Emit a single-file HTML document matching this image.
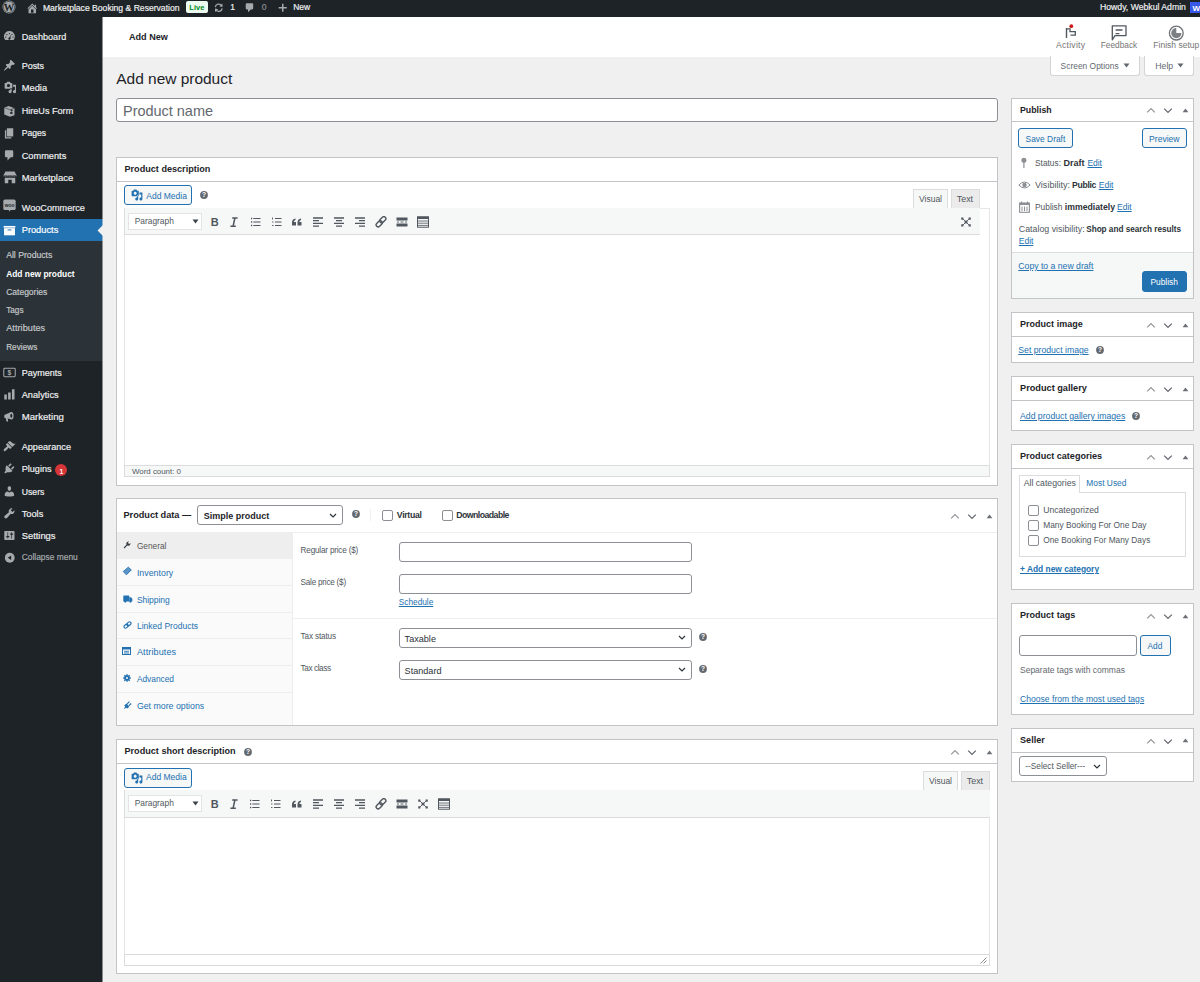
<!DOCTYPE html>
<html><head><meta charset="utf-8"><title>Add new product</title>
<style>
html,body{margin:0;padding:0;}
body{width:1200px;height:982px;overflow:hidden;position:relative;background:#f0f0f1;font-family:"Liberation Sans",sans-serif;}
.a{position:absolute;box-sizing:border-box;}
.t{position:absolute;line-height:0;white-space:pre;font-family:"Liberation Sans",sans-serif;}
.t.s{-webkit-text-stroke:0.18px currentColor;}
.t.b{-webkit-text-stroke:0;font-weight:700;}

</style></head><body>
<div class="a" style="left:0px;top:0px;width:1200px;height:17px;background:#1d2327;"></div>
<div class="a" style="left:0px;top:17px;width:102px;height:965px;background:#1d2327;"></div>
<div class="a" style="left:102px;top:17px;width:1098px;height:40px;background:#fff;"></div>
<div class="a" style="left:102px;top:17px;width:1px;height:40px;background:#8e9193;"></div>
<div class="a" style="left:102px;top:57px;width:1px;height:925px;background:#878b8c;"></div>
<div class="a" style="left:0px;top:219px;width:102px;height:22px;background:#2271b1;"></div>
<div class="a" style="left:0px;top:241px;width:102px;height:120px;background:#2c3338;"></div>
<div class="a" style="left:102px;top:219px;width:1px;height:22px;background:#89b1d1;"></div>
<div class="a" style="left:102px;top:241px;width:1px;height:120px;background:#8e9294;"></div>
<div class="t s" style="left:21.70px;top:37px;font-size:9.1px;color:#f0f0f1;letter-spacing:0.013px;">Dashboard</div>
<div class="t s" style="left:21.70px;top:66px;font-size:9.0px;color:#f0f0f1;letter-spacing:-0.025px;">Posts</div>
<div class="t s" style="left:21.70px;top:88px;font-size:9.3px;color:#f0f0f1;letter-spacing:0.028px;">Media</div>
<div class="t s" style="left:21.70px;top:111px;font-size:9.1px;color:#f0f0f1;">HireUs Form</div>
<div class="t s" style="left:21.70px;top:133px;font-size:8.6px;color:#f0f0f1;">Pages</div>
<div class="t s" style="left:21.70px;top:156px;font-size:9.2px;color:#f0f0f1;letter-spacing:0.017px;">Comments</div>
<div class="t s" style="left:21.70px;top:178px;font-size:9.5px;color:#f0f0f1;letter-spacing:-0.023px;">Marketplace</div>
<div class="t s" style="left:21.70px;top:208px;font-size:9.1px;color:#f0f0f1;letter-spacing:0.024px;">WooCommerce</div>
<div class="t s" style="left:21.70px;top:230px;font-size:9.3px;color:#fff;letter-spacing:-0.013px;">Products</div>
<div class="t s" style="left:21.70px;top:373px;font-size:9.0px;color:#f0f0f1;letter-spacing:0.014px;">Payments</div>
<div class="t s" style="left:21.70px;top:395px;font-size:9.2px;color:#f0f0f1;letter-spacing:0.025px;">Analytics</div>
<div class="t s" style="left:21.70px;top:417px;font-size:9.6px;color:#f0f0f1;">Marketing</div>
<div class="t s" style="left:21.70px;top:447px;font-size:9.1px;color:#f0f0f1;letter-spacing:0.023px;">Appearance</div>
<div class="t s" style="left:21.70px;top:469px;font-size:9.1px;color:#f0f0f1;">Plugins</div>
<div class="t s" style="left:21.70px;top:492px;font-size:8.7px;color:#f0f0f1;">Users</div>
<div class="t s" style="left:21.70px;top:514px;font-size:9.3px;color:#f0f0f1;letter-spacing:-0.029px;">Tools</div>
<div class="t s" style="left:21.70px;top:536px;font-size:9.4px;color:#f0f0f1;letter-spacing:-0.012px;">Settings</div>
<div class="t s" style="left:6.20px;top:255px;font-size:8.7px;color:#c5c8cb;letter-spacing:-0.019px;">All Products</div>
<div class="t b" style="left:6.20px;top:274px;font-size:8.4px;color:#fff;">Add new product</div>
<div class="t s" style="left:6.20px;top:292px;font-size:8.5px;color:#c5c8cb;">Categories</div>
<div class="t s" style="left:6.20px;top:311px;font-size:8.2px;color:#c5c8cb;">Tags</div>
<div class="t s" style="left:6.20px;top:328px;font-size:9.1px;color:#c5c8cb;letter-spacing:0.061px;">Attributes</div>
<div class="t s" style="left:6.20px;top:348px;font-size:8.2px;color:#c5c8cb;letter-spacing:0.017px;">Reviews</div>
<div class="t s" style="left:21.70px;top:557px;font-size:8.4px;color:#a7aaad;letter-spacing:0.014px;">Collapse menu</div>
<div class="a" style="left:55px;top:464px;width:12px;height:12px;border-radius:6px;background:#d63638;"></div>
<div class="t s" style="left:59.50px;top:472px;font-size:7px;color:#fff;">1</div>
<svg class="a" style="left:97px;top:225px;" width="6" height="11" viewBox="0 0 6 11"><path d="M6 0 L0.5 5.5 L6 11 Z" fill="#f0f0f1"/></svg>
<div class="t s" style="left:42.90px;top:8px;font-size:8.6px;color:#f0f0f1;">Marketplace Booking &amp; Reservation</div>
<div class="a" style="left:186px;top:1px;width:22px;height:12px;background:#edfaef;border-radius:2px;"></div>
<div class="t b" style="left:189.30px;top:8px;font-size:7.5px;color:#008a20;">Live</div>
<div class="t s" style="left:230.20px;top:7px;font-size:8.5px;color:#f0f0f1;">1</div>
<div class="t s" style="left:261.70px;top:7px;font-size:8.5px;color:#8c8f94;">0</div>
<div class="t s" style="left:293.20px;top:7px;font-size:8.5px;color:#f0f0f1;letter-spacing:-0.021px;">New</div>
<div class="t s" style="left:1100.00px;top:7px;font-size:8.7px;color:#f0f0f1;letter-spacing:-0.012px;">Howdy, Webkul Admin</div>
<div class="a" style="left:1190px;top:2px;width:10px;height:11px;background:#3858e9;"></div>
<div class="t b" style="left:129.00px;top:37px;font-size:9.1px;color:#1d2327;">Add New</div>
<div class="t" style="left:1056.00px;top:45px;font-size:8.6px;color:#757575;letter-spacing:0.254px;">Activity</div>
<div class="t" style="left:1100.70px;top:45px;font-size:8.3px;color:#757575;letter-spacing:0.017px;">Feedback</div>
<div class="t" style="left:1153.30px;top:45px;font-size:8.5px;color:#757575;letter-spacing:0.017px;">Finish setup</div>
<div class="a" style="left:1050px;top:56px;width:90px;height:20px;background:#fff;border:1px solid #d3d4d7;border-radius:0 0 3px 3px;border-top:none;"></div>
<div class="t" style="left:1060.60px;top:66px;font-size:8.4px;color:#646970;letter-spacing:0.022px;">Screen Options</div>
<div class="a" style="left:1144px;top:56px;width:50px;height:20px;background:#fff;border:1px solid #d3d4d7;border-radius:0 0 3px 3px;border-top:none;"></div>
<div class="t" style="left:1155.30px;top:66px;font-size:8.7px;color:#646970;">Help</div>
<svg class="a" style="left:1122.5px;top:63px;" width="7" height="5" viewBox="0 0 7 5"><path d="M0.5 0.5 L6.5 0.5 L3.5 4.5 Z" fill="#646970"/></svg>
<svg class="a" style="left:1176.7px;top:63px;" width="7" height="5" viewBox="0 0 7 5"><path d="M0.5 0.5 L6.5 0.5 L3.5 4.5 Z" fill="#646970"/></svg>
<div class="t" style="left:116.25px;top:79px;font-size:15.5px;color:#1d2327;letter-spacing:-0.023px;">Add new product</div>
<div class="a" style="left:116px;top:98px;width:882px;height:24px;background:#fff;border:1px solid #8c8f94;border-radius:3px;"></div>
<div class="t" style="left:123.00px;top:111px;font-size:14.5px;color:#646970;letter-spacing:-0.024px;">Product name</div>
<div class="a" style="left:116px;top:157px;width:882px;height:329px;background:#fff;border:1px solid #c3c4c7;"></div>
<div class="a" style="left:117px;top:181px;width:880px;height:1px;background:#c3c4c7;"></div>
<div class="t b" style="left:124.50px;top:169px;font-size:9.1px;color:#1d2327;">Product description</div>
<div class="a" style="left:124px;top:185px;width:68px;height:20px;background:#f6f7f7;border:1px solid #2271b1;border-radius:3px;"></div>
<div class="t" style="left:146.25px;top:196px;font-size:8.5px;color:#2271b1;">Add Media</div>
<svg class="a" style="left:130.5px;top:189.3px;" width="12" height="12" viewBox="0 0 20 20"><path d="M13 11V4c0-.55-.45-1-1-1h-1.67L9 1H5L3.67 3H2c-.55 0-1 .45-1 1v7c0 .55.45 1 1 1h10c.55 0 1-.45 1-1zM7 4.5c1.38 0 2.5 1.12 2.5 2.5S8.38 9.5 7 9.5 4.5 8.380 4.5 7 5.62 4.5 7 4.5zM14 6h5v10.5c0 1.38-1.12 2.5-2.5 2.5S14 17.88 14 16.5s1.12-2.5 2.5-2.5c.17 0 .34.02.5.05V9h-3V6zm-4 8.05V11h2v5.5c0 1.38-1.12 2.5-2.5 2.5S7 17.88 7 16.5 8.12 14 9.5 14c.17 0 .34.02.5.05z" fill="#2271b1" fill-rule="evenodd"/></svg>
<svg class="a" style="left:198.75px;top:190px;" width="10" height="10" viewBox="0 0 10 10"><circle cx="5" cy="5" r="3.9" fill="#646970"/><text x="5.1" y="7.4" font-size="6.6" font-weight="700" fill="#fff" text-anchor="middle" font-family="Liberation Sans">?</text></svg>
<div class="a" style="left:124px;top:208px;width:866px;height:269px;background:#fff;border:1px solid #e6e6e8;"></div>
<div class="a" style="left:913px;top:189px;width:35px;height:20px;background:#f6f7f7;border:1px solid #dcdcde;border-bottom:none;"></div>
<div class="a" style="left:951px;top:189px;width:29px;height:20px;background:#ebebeb;border:1px solid #dcdcde;border-bottom:none;"></div>
<div class="t" style="left:919.00px;top:199px;font-size:8.5px;color:#50575e;">Visual</div>
<div class="t" style="left:956.80px;top:199px;font-size:8.9px;color:#50575e;letter-spacing:-0.011px;">Text</div>
<div class="a" style="left:124px;top:208px;width:827px;height:1px;background:#dcdcde;"></div>
<div class="a" style="left:914px;top:208px;width:33px;height:1px;background:#f6f7f7;"></div>
<div class="a" style="left:124px;top:208px;width:856px;height:26px;background:#f6f7f7;border:1px solid #dcdcde;border-top:none;border-right:none;border-bottom:none;"></div>
<div class="a" style="left:124px;top:234px;width:856px;height:1px;background:#dcdcde;"></div>
<div class="a" style="left:124px;top:465px;width:866px;height:12px;background:#f6f7f7;border:1px solid #dcdcde;"></div>
<div class="a" style="left:128px;top:213px;width:74px;height:17px;background:#fff;border:1px solid #e4e4e4;"></div>
<div class="t" style="left:134.70px;top:221px;font-size:8.4px;color:#50575e;">Paragraph</div>
<svg class="a" style="left:191.5px;top:219.0px;" width="7" height="5" viewBox="0 0 7 5"><path d="M0.5 0.5 L6.5 0.5 L3.5 4.5 Z" fill="#3c434a"/></svg>
<div class="t" style="left:132.00px;top:472px;font-size:7.9px;color:#50575e;">Word count: 0</div>
<div class="a" style="left:116px;top:498px;width:882px;height:228px;background:#fff;border:1px solid #c3c4c7;"></div>
<div class="a" style="left:117px;top:532px;width:880px;height:1px;background:#eee;"></div>
<div class="t b" style="left:123.50px;top:515px;font-size:9.2px;color:#1d2327;letter-spacing:-0.018px;">Product data —</div>
<div class="a" style="left:197px;top:505px;width:146px;height:20px;background:#fff;border:1px solid #8c8f94;border-radius:3px;"></div>
<div class="t b" style="left:203.75px;top:516px;font-size:9.0px;color:#1d2327;">Simple product</div>
<svg class="a" style="left:350.7px;top:509px;" width="10" height="10" viewBox="0 0 10 10"><circle cx="5" cy="5" r="3.9" fill="#646970"/><text x="5.1" y="7.4" font-size="6.6" font-weight="700" fill="#fff" text-anchor="middle" font-family="Liberation Sans">?</text></svg>
<div class="a" style="left:370px;top:509px;width:1px;height:12px;background:#f0f0f1;"></div>
<div class="a" style="left:382px;top:510px;width:11px;height:11px;background:#fff;border:1px solid #8c8f94;border-radius:2px;"></div>
<div class="t b" style="left:396.80px;top:515px;font-size:8.7px;color:#2c3338;letter-spacing:-0.304px;">Virtual</div>
<div class="a" style="left:442px;top:510px;width:11px;height:11px;background:#fff;border:1px solid #8c8f94;border-radius:2px;"></div>
<div class="t b" style="left:456.30px;top:515px;font-size:8.7px;color:#2c3338;letter-spacing:-0.526px;">Downloadable</div>
<svg class="a" style="left:949.8px;top:513px;" width="10" height="7" viewBox="0 0 10 7"><path d="M1.2 5.4 L5 1.6 L8.8 5.4" stroke="#94979b" stroke-width="1.3" fill="none"/></svg>
<svg class="a" style="left:966.7px;top:513px;" width="10" height="7" viewBox="0 0 10 7"><path d="M1.2 1.6 L5 5.4 L8.8 1.6" stroke="#646970" stroke-width="1.3" fill="none"/></svg>
<svg class="a" style="left:985.8px;top:513.7px;" width="7" height="5" viewBox="0 0 7 5"><path d="M0.6 4.3 L6.4 4.3 L3.5 0.6 Z" fill="#6c7075"/></svg>
<div class="a" style="left:117px;top:533px;width:175px;height:192px;background:#fafafa;"></div>
<div class="a" style="left:292px;top:533px;width:1px;height:192px;background:#eee;"></div>
<div class="a" style="left:117px;top:533px;width:175px;height:26px;background:#eee;"></div>
<div class="a" style="left:117px;top:585px;width:175px;height:1px;background:#eee;"></div>
<div class="a" style="left:117px;top:612px;width:175px;height:1px;background:#eee;"></div>
<div class="a" style="left:117px;top:638px;width:175px;height:1px;background:#eee;"></div>
<div class="a" style="left:117px;top:665px;width:175px;height:1px;background:#eee;"></div>
<div class="a" style="left:117px;top:692px;width:175px;height:1px;background:#eee;"></div>
<div class="t" style="left:136.90px;top:546px;font-size:8.3px;color:#555;">General</div>
<div class="t" style="left:136.90px;top:573px;font-size:8.8px;color:#2271b1;letter-spacing:0.023px;">Inventory</div>
<div class="t" style="left:136.90px;top:600px;font-size:8.5px;color:#2271b1;letter-spacing:-0.024px;">Shipping</div>
<div class="t" style="left:136.90px;top:626px;font-size:8.5px;color:#2271b1;letter-spacing:0.018px;">Linked Products</div>
<div class="t" style="left:136.90px;top:652px;font-size:9.1px;color:#2271b1;letter-spacing:0.095px;">Attributes</div>
<div class="t" style="left:136.90px;top:679px;font-size:8.4px;color:#2271b1;letter-spacing:-0.026px;">Advanced</div>
<div class="t" style="left:136.90px;top:706px;font-size:8.8px;color:#2271b1;letter-spacing:-0.013px;">Get more options</div>
<div class="t" style="left:300.60px;top:551px;font-size:8.2px;color:#50575e;letter-spacing:-0.206px;">Regular price ($)</div>
<div class="a" style="left:399px;top:542px;width:293px;height:20px;background:#fff;border:1px solid #8c8f94;border-radius:3px;"></div>
<div class="t" style="left:300.60px;top:583px;font-size:8.2px;color:#50575e;letter-spacing:-0.242px;">Sale price ($)</div>
<div class="a" style="left:399px;top:574px;width:293px;height:20px;background:#fff;border:1px solid #8c8f94;border-radius:3px;"></div>
<div class="t" style="left:398.80px;top:602px;font-size:8.3px;color:#2271b1;letter-spacing:-0.016px;text-decoration:underline;text-underline-offset:1px;">Schedule</div>
<div class="a" style="left:293px;top:618px;width:704px;height:1px;background:#eee;"></div>
<div class="t" style="left:300.60px;top:637px;font-size:8.2px;color:#50575e;letter-spacing:-0.156px;">Tax status</div>
<div class="a" style="left:399px;top:628px;width:293px;height:20px;background:#fff;border:1px solid #8c8f94;border-radius:3px;"></div>
<div class="t" style="left:404.60px;top:639px;font-size:9.1px;color:#2c3338;">Taxable</div>
<div class="t" style="left:300.60px;top:669px;font-size:8.2px;color:#50575e;letter-spacing:-0.400px;">Tax class</div>
<div class="a" style="left:399px;top:660px;width:293px;height:20px;background:#fff;border:1px solid #8c8f94;border-radius:3px;"></div>
<div class="t" style="left:404.60px;top:671px;font-size:9.1px;color:#2c3338;">Standard</div>
<svg class="a" style="left:697.5px;top:632px;" width="10" height="10" viewBox="0 0 10 10"><circle cx="5" cy="5" r="3.9" fill="#646970"/><text x="5.1" y="7.4" font-size="6.6" font-weight="700" fill="#fff" text-anchor="middle" font-family="Liberation Sans">?</text></svg>
<svg class="a" style="left:697.5px;top:663.9px;" width="10" height="10" viewBox="0 0 10 10"><circle cx="5" cy="5" r="3.9" fill="#646970"/><text x="5.1" y="7.4" font-size="6.6" font-weight="700" fill="#fff" text-anchor="middle" font-family="Liberation Sans">?</text></svg>
<svg class="a" style="left:329px;top:512.9px;" width="8" height="5" viewBox="0 0 8 5"><path d="M1 1 L4 4 L7 1" stroke="#2c3338" stroke-width="1.2" fill="none"/></svg>
<svg class="a" style="left:677.9px;top:635.3px;" width="8" height="5" viewBox="0 0 8 5"><path d="M1 1 L4 4 L7 1" stroke="#2c3338" stroke-width="1.2" fill="none"/></svg>
<svg class="a" style="left:677.9px;top:667.3px;" width="8" height="5" viewBox="0 0 8 5"><path d="M1 1 L4 4 L7 1" stroke="#2c3338" stroke-width="1.2" fill="none"/></svg>
<div class="a" style="left:116px;top:739px;width:882px;height:235px;background:#fff;border:1px solid #c3c4c7;"></div>
<div class="a" style="left:117px;top:763px;width:880px;height:1px;background:#c3c4c7;"></div>
<div class="t b" style="left:124.50px;top:751px;font-size:9.1px;color:#1d2327;">Product short description</div>
<svg class="a" style="left:243.3px;top:746.5px;" width="10" height="10" viewBox="0 0 10 10"><circle cx="5" cy="5" r="3.9" fill="#646970"/><text x="5.1" y="7.4" font-size="6.6" font-weight="700" fill="#fff" text-anchor="middle" font-family="Liberation Sans">?</text></svg>
<svg class="a" style="left:950px;top:748.8px;" width="10" height="7" viewBox="0 0 10 7"><path d="M1.2 5.4 L5 1.6 L8.8 5.4" stroke="#94979b" stroke-width="1.3" fill="none"/></svg>
<svg class="a" style="left:966.8px;top:748.8px;" width="10" height="7" viewBox="0 0 10 7"><path d="M1.2 1.6 L5 5.4 L8.8 1.6" stroke="#646970" stroke-width="1.3" fill="none"/></svg>
<svg class="a" style="left:985.5px;top:749.5px;" width="7" height="5" viewBox="0 0 7 5"><path d="M0.6 4.3 L6.4 4.3 L3.5 0.6 Z" fill="#6c7075"/></svg>
<div class="a" style="left:124px;top:768px;width:68px;height:20px;background:#f6f7f7;border:1px solid #2271b1;border-radius:3px;"></div>
<div class="t" style="left:146.00px;top:777px;font-size:8.5px;color:#2271b1;">Add Media</div>
<svg class="a" style="left:130.5px;top:772.3px;" width="12" height="12" viewBox="0 0 20 20"><path d="M13 11V4c0-.55-.45-1-1-1h-1.67L9 1H5L3.67 3H2c-.55 0-1 .45-1 1v7c0 .55.45 1 1 1h10c.55 0 1-.45 1-1zM7 4.5c1.38 0 2.5 1.12 2.5 2.5S8.38 9.5 7 9.5 4.5 8.380 4.5 7 5.62 4.5 7 4.5zM14 6h5v10.5c0 1.38-1.12 2.5-2.5 2.5S14 17.88 14 16.5s1.12-2.5 2.5-2.5c.17 0 .34.02.5.05V9h-3V6zm-4 8.05V11h2v5.5c0 1.38-1.12 2.5-2.5 2.5S7 17.88 7 16.5 8.12 14 9.5 14c.17 0 .34.02.5.05z" fill="#2271b1" fill-rule="evenodd"/></svg>
<div class="a" style="left:124px;top:790px;width:866px;height:176px;background:#fff;border:1px solid #e6e6e8;"></div>
<div class="a" style="left:923px;top:771px;width:35px;height:20px;background:#f6f7f7;border:1px solid #dcdcde;border-bottom:none;"></div>
<div class="a" style="left:961px;top:771px;width:29px;height:20px;background:#ebebeb;border:1px solid #dcdcde;border-bottom:none;"></div>
<div class="t" style="left:929.00px;top:781px;font-size:8.5px;color:#50575e;">Visual</div>
<div class="t" style="left:966.80px;top:781px;font-size:8.9px;color:#50575e;letter-spacing:-0.011px;">Text</div>
<div class="a" style="left:124px;top:790px;width:837px;height:1px;background:#dcdcde;"></div>
<div class="a" style="left:924px;top:790px;width:33px;height:1px;background:#f6f7f7;"></div>
<div class="a" style="left:124px;top:790px;width:866px;height:27px;background:#f6f7f7;border:1px solid #dcdcde;border-top:none;border-right:none;border-bottom:none;"></div>
<div class="a" style="left:124px;top:817px;width:866px;height:1px;background:#dcdcde;"></div>
<div class="a" style="left:124px;top:954px;width:866px;height:12px;background:#fff;border:1px solid #dcdcde;"></div>
<div class="a" style="left:128px;top:795px;width:74px;height:17px;background:#fff;border:1px solid #e4e4e4;"></div>
<div class="t" style="left:134.70px;top:803px;font-size:8.4px;color:#50575e;">Paragraph</div>
<svg class="a" style="left:191.5px;top:801.0px;" width="7" height="5" viewBox="0 0 7 5"><path d="M0.5 0.5 L6.5 0.5 L3.5 4.5 Z" fill="#3c434a"/></svg>
<svg class="a" style="left:980px;top:957px;" width="7" height="7" viewBox="0 0 7 7"><path d="M6.5 0.5 L0.5 6.5 M6.5 3.5 L3.5 6.5" stroke="#8c8f94" stroke-width="1"/></svg>
<div class="a" style="left:1011px;top:98px;width:183px;height:201px;background:#fff;border:1px solid #c3c4c7;"></div>
<div class="a" style="left:1012px;top:121px;width:181px;height:1px;background:#c3c4c7;"></div>
<div class="t b" style="left:1020.00px;top:110px;font-size:8.8px;color:#1d2327;letter-spacing:-0.011px;">Publish</div>
<svg class="a" style="left:1146.2px;top:107.4px;" width="10" height="7" viewBox="0 0 10 7"><path d="M1.2 5.4 L5 1.6 L8.8 5.4" stroke="#94979b" stroke-width="1.3" fill="none"/></svg>
<svg class="a" style="left:1163px;top:107.4px;" width="10" height="7" viewBox="0 0 10 7"><path d="M1.2 1.6 L5 5.4 L8.8 1.6" stroke="#646970" stroke-width="1.3" fill="none"/></svg>
<svg class="a" style="left:1181.5px;top:108.1px;" width="7" height="5" viewBox="0 0 7 5"><path d="M0.6 4.3 L6.4 4.3 L3.5 0.6 Z" fill="#6c7075"/></svg>
<div class="a" style="left:1018px;top:128px;width:55px;height:20px;background:#f6f7f7;border:1px solid #2271b1;border-radius:3px;"></div>
<div class="t" style="left:1025.60px;top:139px;font-size:8.4px;color:#2271b1;letter-spacing:0.012px;">Save Draft</div>
<div class="a" style="left:1142px;top:128px;width:45px;height:20px;background:#f6f7f7;border:1px solid #2271b1;border-radius:3px;"></div>
<div class="t" style="left:1149.10px;top:139px;font-size:8.6px;color:#2271b1;letter-spacing:-0.019px;">Preview</div>
<div class="t" style="left:1035.00px;top:163px;font-size:8.3px;color:#50575e;letter-spacing:0.024px;">Status:</div>
<div class="t b" style="left:1063.50px;top:163px;font-size:9.0px;color:#2c3338;letter-spacing:0.021px;">Draft</div>
<div class="t" style="left:1087.40px;top:163px;font-size:8.5px;color:#2271b1;letter-spacing:-0.021px;text-decoration:underline;text-underline-offset:1px;">Edit</div>
<div class="t" style="left:1035.00px;top:185px;font-size:9.0px;color:#50575e;letter-spacing:0.017px;">Visibility:</div>
<div class="t b" style="left:1072.00px;top:185px;font-size:8.6px;color:#2c3338;letter-spacing:-0.280px;">Public</div>
<div class="t" style="left:1098.80px;top:185px;font-size:8.5px;color:#2271b1;letter-spacing:-0.021px;text-decoration:underline;text-underline-offset:1px;">Edit</div>
<div class="t" style="left:1035.00px;top:207px;font-size:8.4px;color:#50575e;">Publish</div>
<div class="t b" style="left:1064.80px;top:207px;font-size:8.7px;color:#2c3338;">immediately</div>
<div class="t" style="left:1117.10px;top:207px;font-size:8.5px;color:#2271b1;letter-spacing:-0.021px;text-decoration:underline;text-underline-offset:1px;">Edit</div>
<div class="t" style="left:1018.80px;top:229px;font-size:8.8px;color:#50575e;letter-spacing:0.016px;">Catalog visibility:</div>
<div class="t b" style="left:1086.20px;top:230px;font-size:8.2px;color:#2c3338;letter-spacing:-0.011px;">Shop and search results</div>
<div class="t" style="left:1018.80px;top:241px;font-size:8.5px;color:#2271b1;letter-spacing:-0.021px;text-decoration:underline;text-underline-offset:1px;">Edit</div>
<div class="a" style="left:1012px;top:252px;width:181px;height:1px;background:#dcdcde;"></div>
<div class="a" style="left:1012px;top:253px;width:181px;height:45px;background:#f6f7f7;"></div>
<div class="t" style="left:1018.30px;top:266px;font-size:8.7px;color:#2271b1;letter-spacing:-0.013px;text-decoration:underline;text-underline-offset:1px;">Copy to a new draft</div>
<div class="a" style="left:1142px;top:271px;width:45px;height:21px;background:#2271b1;border:1px solid #2271b1;border-radius:3px;"></div>
<div class="t" style="left:1150.40px;top:282px;font-size:8.4px;color:#fff;">Publish</div>
<div class="a" style="left:1011px;top:312px;width:183px;height:51px;background:#fff;border:1px solid #c3c4c7;"></div>
<div class="a" style="left:1012px;top:336px;width:181px;height:1px;background:#c3c4c7;"></div>
<div class="t b" style="left:1020.00px;top:324px;font-size:9.0px;color:#1d2327;letter-spacing:0.016px;">Product image</div>
<svg class="a" style="left:1146.2px;top:322px;" width="10" height="7" viewBox="0 0 10 7"><path d="M1.2 5.4 L5 1.6 L8.8 5.4" stroke="#94979b" stroke-width="1.3" fill="none"/></svg>
<svg class="a" style="left:1163px;top:322px;" width="10" height="7" viewBox="0 0 10 7"><path d="M1.2 1.6 L5 5.4 L8.8 1.6" stroke="#646970" stroke-width="1.3" fill="none"/></svg>
<svg class="a" style="left:1181.5px;top:322.7px;" width="7" height="5" viewBox="0 0 7 5"><path d="M0.6 4.3 L6.4 4.3 L3.5 0.6 Z" fill="#6c7075"/></svg>
<div class="t" style="left:1018.30px;top:350px;font-size:8.7px;color:#2271b1;letter-spacing:-0.013px;text-decoration:underline;text-underline-offset:1px;">Set product image</div>
<svg class="a" style="left:1095.4px;top:344.8px;" width="10" height="10" viewBox="0 0 10 10"><circle cx="5" cy="5" r="3.9" fill="#646970"/><text x="5.1" y="7.4" font-size="6.6" font-weight="700" fill="#fff" text-anchor="middle" font-family="Liberation Sans">?</text></svg>
<div class="a" style="left:1011px;top:376px;width:183px;height:55px;background:#fff;border:1px solid #c3c4c7;"></div>
<div class="a" style="left:1012px;top:400px;width:181px;height:1px;background:#c3c4c7;"></div>
<div class="t b" style="left:1020.00px;top:388px;font-size:9.2px;color:#1d2327;">Product gallery</div>
<svg class="a" style="left:1146.2px;top:386.2px;" width="10" height="7" viewBox="0 0 10 7"><path d="M1.2 5.4 L5 1.6 L8.8 5.4" stroke="#94979b" stroke-width="1.3" fill="none"/></svg>
<svg class="a" style="left:1163px;top:386.2px;" width="10" height="7" viewBox="0 0 10 7"><path d="M1.2 1.6 L5 5.4 L8.8 1.6" stroke="#646970" stroke-width="1.3" fill="none"/></svg>
<svg class="a" style="left:1181.5px;top:386.9px;" width="7" height="5" viewBox="0 0 7 5"><path d="M0.6 4.3 L6.4 4.3 L3.5 0.6 Z" fill="#6c7075"/></svg>
<div class="t" style="left:1020.00px;top:416px;font-size:8.7px;color:#2271b1;text-decoration:underline;text-underline-offset:1px;">Add product gallery images</div>
<svg class="a" style="left:1131.3px;top:411px;" width="10" height="10" viewBox="0 0 10 10"><circle cx="5" cy="5" r="3.9" fill="#646970"/><text x="5.1" y="7.4" font-size="6.6" font-weight="700" fill="#fff" text-anchor="middle" font-family="Liberation Sans">?</text></svg>
<div class="a" style="left:1011px;top:444px;width:183px;height:146px;background:#fff;border:1px solid #c3c4c7;"></div>
<div class="a" style="left:1012px;top:468px;width:181px;height:1px;background:#c3c4c7;"></div>
<div class="t b" style="left:1020.00px;top:456px;font-size:9.1px;color:#1d2327;letter-spacing:-0.014px;">Product categories</div>
<svg class="a" style="left:1146.2px;top:454.2px;" width="10" height="7" viewBox="0 0 10 7"><path d="M1.2 5.4 L5 1.6 L8.8 5.4" stroke="#94979b" stroke-width="1.3" fill="none"/></svg>
<svg class="a" style="left:1163px;top:454.2px;" width="10" height="7" viewBox="0 0 10 7"><path d="M1.2 1.6 L5 5.4 L8.8 1.6" stroke="#646970" stroke-width="1.3" fill="none"/></svg>
<svg class="a" style="left:1181.5px;top:454.9px;" width="7" height="5" viewBox="0 0 7 5"><path d="M0.6 4.3 L6.4 4.3 L3.5 0.6 Z" fill="#6c7075"/></svg>
<div class="a" style="left:1019px;top:492px;width:167px;height:65px;background:#fff;border:1px solid #dcdcde;"></div>
<div class="a" style="left:1019px;top:475px;width:61px;height:18px;background:#fff;border:1px solid #dcdcde;border-bottom:none;"></div>
<div class="t" style="left:1023.70px;top:483px;font-size:8.7px;color:#50575e;">All categories</div>
<div class="t" style="left:1086.25px;top:483px;font-size:8.4px;color:#2271b1;letter-spacing:0.018px;">Most Used</div>
<div class="a" style="left:1028px;top:505px;width:11px;height:11px;background:#fff;border:1px solid #8c8f94;border-radius:2px;"></div>
<div class="t" style="left:1043.20px;top:510px;font-size:8.6px;color:#50575e;letter-spacing:0.019px;">Uncategorized</div>
<div class="a" style="left:1028px;top:520px;width:11px;height:11px;background:#fff;border:1px solid #8c8f94;border-radius:2px;"></div>
<div class="t" style="left:1043.20px;top:525px;font-size:8.4px;color:#50575e;">Many Booking For One Day</div>
<div class="a" style="left:1028px;top:535px;width:11px;height:11px;background:#fff;border:1px solid #8c8f94;border-radius:2px;"></div>
<div class="t" style="left:1043.20px;top:540px;font-size:8.3px;color:#50575e;letter-spacing:0.026px;">One Booking For Many Days</div>
<div class="t b" style="left:1020.00px;top:569px;font-size:8.4px;color:#2271b1;text-decoration:underline;text-underline-offset:1px;">+ Add new category</div>
<div class="a" style="left:1011px;top:603px;width:183px;height:112px;background:#fff;border:1px solid #c3c4c7;"></div>
<div class="t b" style="left:1020.00px;top:615px;font-size:9.0px;color:#1d2327;letter-spacing:0.019px;">Product tags</div>
<svg class="a" style="left:1146.2px;top:612.8px;" width="10" height="7" viewBox="0 0 10 7"><path d="M1.2 5.4 L5 1.6 L8.8 5.4" stroke="#94979b" stroke-width="1.3" fill="none"/></svg>
<svg class="a" style="left:1163px;top:612.8px;" width="10" height="7" viewBox="0 0 10 7"><path d="M1.2 1.6 L5 5.4 L8.8 1.6" stroke="#646970" stroke-width="1.3" fill="none"/></svg>
<svg class="a" style="left:1181.5px;top:613.5px;" width="7" height="5" viewBox="0 0 7 5"><path d="M0.6 4.3 L6.4 4.3 L3.5 0.6 Z" fill="#6c7075"/></svg>
<div class="a" style="left:1019px;top:635px;width:118px;height:21px;background:#fff;border:1px solid #8c8f94;border-radius:3px;"></div>
<div class="a" style="left:1140px;top:635px;width:31px;height:21px;background:#f6f7f7;border:1px solid #2271b1;border-radius:3px;"></div>
<div class="t" style="left:1147.50px;top:646px;font-size:8.3px;color:#2271b1;letter-spacing:0.013px;">Add</div>
<div class="t" style="left:1020.00px;top:670px;font-size:8.5px;color:#646970;">Separate tags with commas</div>
<div class="t" style="left:1020.00px;top:699px;font-size:8.6px;color:#2271b1;text-decoration:underline;text-underline-offset:1px;">Choose from the most used tags</div>
<div class="a" style="left:1011px;top:728px;width:183px;height:54px;background:#fff;border:1px solid #c3c4c7;"></div>
<div class="a" style="left:1012px;top:752px;width:181px;height:1px;background:#c3c4c7;"></div>
<div class="t b" style="left:1020.00px;top:740px;font-size:9.1px;color:#1d2327;letter-spacing:0.020px;">Seller</div>
<svg class="a" style="left:1146.2px;top:737.7px;" width="10" height="7" viewBox="0 0 10 7"><path d="M1.2 5.4 L5 1.6 L8.8 5.4" stroke="#94979b" stroke-width="1.3" fill="none"/></svg>
<svg class="a" style="left:1163px;top:737.7px;" width="10" height="7" viewBox="0 0 10 7"><path d="M1.2 1.6 L5 5.4 L8.8 1.6" stroke="#646970" stroke-width="1.3" fill="none"/></svg>
<svg class="a" style="left:1181.5px;top:738.4px;" width="7" height="5" viewBox="0 0 7 5"><path d="M0.6 4.3 L6.4 4.3 L3.5 0.6 Z" fill="#6c7075"/></svg>
<div class="a" style="left:1019px;top:756px;width:88px;height:20px;background:#fff;border:1px solid #8c8f94;border-radius:3px;"></div>
<div class="t" style="left:1025.30px;top:766px;font-size:8.3px;color:#50575e;letter-spacing:-0.019px;">--Select Seller---</div>
<svg class="a" style="left:1093.3px;top:763.7px;" width="8" height="5" viewBox="0 0 8 5"><path d="M1 1 L4 4 L7 1" stroke="#2c3338" stroke-width="1.2" fill="none"/></svg>
<svg class="a" style="left:3.3px;top:30.1px;" width="12.8" height="12.8" viewBox="0 0 20 20"><path d="M3.4 15.8 A8.6 8.6 0 1 1 16.6 15.8 Z" fill="#a7aaad"/><circle cx="10" cy="5.6" r="1" fill="#1d2327"/><circle cx="6" cy="7.2" r="1" fill="#1d2327"/><circle cx="14" cy="7.2" r="1" fill="#1d2327"/><circle cx="4.2" cy="11" r="1" fill="#1d2327"/><circle cx="15.8" cy="11" r="1" fill="#1d2327"/><path d="M9 13.5 L12.6 7.2 L11.2 14.2 Z" fill="#1d2327"/><circle cx="10" cy="13.6" r="1.7" fill="#1d2327"/></svg>
<svg class="a" style="left:3.3px;top:59.4px;" width="12.8" height="12.8" viewBox="0 0 20 20"><path d="M10.44 3.02l1.82-1.82 6.36 6.35-1.83 1.82c-1.05-.68-2.48-.57-3.41.36l-.75.75c-.92.93-1.04 2.35-.35 3.41l-1.830 1.82-2.41-2.41-2.8 2.79c-.42.42-3.38 2.71-3.8 2.29s1.86-3.39 2.28-3.81l2.79-2.79L4.1 9.36l1.83-1.82c1.05.69 2.48.57 3.4-.36l.75-.75c.93-.92 1.05-2.35.36-3.41z" fill="#a7aaad" /></svg>
<svg class="a" style="left:3.6px;top:81.2px;" width="12.8" height="12.8" viewBox="0 0 20 20"><path d="M13 11V4c0-.55-.45-1-1-1h-1.67L9 1H5L3.67 3H2c-.55 0-1 .45-1 1v7c0 .55.45 1 1 1h10c.55 0 1-.45 1-1zM7 4.5c1.38 0 2.5 1.12 2.5 2.5S8.38 9.5 7 9.5 4.5 8.38 4.5 7 5.62 4.5 7 4.5zM14 6h5v10.5c0 1.38-1.12 2.5-2.5 2.5S14 17.88 14 16.5s1.12-2.5 2.5-2.5c.17 0 .34.02.5.05V9h-3V6zm-4 8.05V11h2v5.5c0 1.38-1.12 2.5-2.5 2.5S7 17.88 7 16.5 8.12 14 9.5 14c.17 0 .34.02.5.05z" fill="#a7aaad" fill-rule="evenodd" /></svg>
<svg class="a" style="left:3.2px;top:104.8px;" width="12.8" height="12.8" viewBox="0 0 20 20"><path d="M2 4 L9 1.5 L18 5 L18 16 L11 18.5 L2 15 Z" fill="#a7aaad"/><path d="M2 4 L11 7.5 L18 5" stroke="#1d2327" stroke-width="0.8" fill="none"/><circle cx="13.5" cy="8.5" r="1.5" fill="#1d2327"/><ellipse cx="13" cy="12.5" rx="2.2" ry="1.6" fill="#1d2327"/></svg>
<svg class="a" style="left:3.1px;top:126.8px;" width="12.8" height="12.8" viewBox="0 0 20 20"><path d="M6 15V2h10v13H6zm-1 1h8v2H3V5h2v11z" fill="#a7aaad" /></svg>
<svg class="a" style="left:3.1px;top:148.9px;" width="12.8" height="12.8" viewBox="0 0 20 20"><path d="M5 2h9c1.1 0 2 .9 2 2v7c0 1.1-.9 2-2 2h-2l-5 5v-5H5c-1.1 0-2-.9-2-2V4c0-1.1.9-2 2-2z" fill="#a7aaad" /></svg>
<svg class="a" style="left:2.6px;top:170.3px;" width="14" height="14" viewBox="0 0 20 20"><path d="M3.5 2 L16.5 2 L19.5 8 L0.5 8 Z" fill="#a7aaad"/><path d="M0.5 8 Q3.7 11 6.8 8 Q10 11 13.2 8 Q16.3 11 19.5 8 L19.5 9 L0.5 9Z" fill="#a7aaad"/><path d="M2.5 11 L17.5 11 L17.5 19 L12.5 19 L12.5 14 L7.5 14 L7.5 19 L2.5 19 Z" fill="#a7aaad"/></svg>
<svg class="a" style="left:3.2px;top:199.3px;" width="13" height="13" viewBox="0 0 20 20"><rect x="0.5" y="0.8" width="19" height="16.2" rx="2.5" fill="#a7aaad"/><path d="M8.5 16.5 L10.5 19.5 L11.5 16.5 Z" fill="#a7aaad"/><text x="10" y="11.6" font-size="7.5" font-weight="700" text-anchor="middle" fill="#1d2327" font-family="Liberation Sans">woo</text></svg>
<svg class="a" style="left:3.4px;top:223.8px;" width="13" height="13" viewBox="0 0 20 20"><rect x="1" y="3" width="18" height="2.6" fill="#fff"/><rect x="1.6" y="6.4" width="16.8" height="11" fill="#fff"/><rect x="7" y="8.4" width="6" height="1.5" fill="#2271b1"/></svg>
<svg class="a" style="left:3.1px;top:365.5px;" width="13" height="13" viewBox="0 0 20 20"><rect x="1.2" y="3.5" width="17.6" height="13" rx="1.5" stroke="#a7aaad" stroke-width="1.6" fill="none"/><text x="10" y="14.3" font-size="10.5" font-weight="700" text-anchor="middle" fill="#a7aaad" font-family="Liberation Sans">$</text></svg>
<svg class="a" style="left:3.2px;top:388.2px;" width="12.8" height="12.8" viewBox="0 0 20 20"><path d="M18 18V2h-4v16h4zm-6 0V7H8v11h4zm-6 0v-8H2v8h4z" fill="#a7aaad" /></svg>
<svg class="a" style="left:3.2px;top:410.4px;" width="12.8" height="12.8" viewBox="0 0 20 20"><path d="M2 8 L11 4 L11 14 L2 12 Z" fill="#a7aaad"/><ellipse cx="13" cy="9" rx="3.5" ry="6" fill="#a7aaad"/><ellipse cx="13" cy="9" rx="1.6" ry="3" fill="#1d2327"/><path d="M4 12 L7.5 12.8 L8 18 L5.5 18 Z" fill="#a7aaad"/></svg>
<svg class="a" style="left:3.2px;top:439.8px;" width="12.8" height="12.8" viewBox="0 0 20 20"><path d="M14.48 11.06L7.41 3.99l1.5-1.5c.5-.56 2.3-.47 3.51.32 1.21.8 1.43 1.28 2.91 2.1 1.18.64 2.45 1.26 4.45.85zm-.71.71L6.7 4.7 4.93 6.47c-.39.39-.39 1.020 0 1.41l1.06 1.06c.39.39.39 1.03 0 1.42-.6.6-1.43 1.11-2.21 1.69-.35.26-.7.53-1.010.84C1.43 14.23.4 16.08 1.4 17.07c.99 1 2.84-.03 4.18-1.36.31-.31.58-.66.85-1.02.57-.78 1.08-1.61 1.69-2.21.39-.39 1.02-.39 1.41 0l1.06 1.06c.39.39 1.02.39 1.41 0z" fill="#a7aaad" /></svg>
<svg class="a" style="left:3.2px;top:462.4px;" width="12.8" height="12.8" viewBox="0 0 20 20"><path d="M13.11 4.36L9.87 7.6 8 5.73l3.24-3.24c.35-.34 1.05-.2 1.56.32.52.51.66 1.21.31 1.55zm-8 1.77l.91-1.12 9.01 9.01-1.19.84c-.71.71-2.63 1.160-3.82 1.16H6.14L4.9 17.26c-.59.59-1.54.59-2.12 0-.59-.58-.59-1.53 0-2.12l1.24-1.24v-3.88c0-1.13.4-3.19 1.09-3.89zm7.26 3.97l3.24-3.24c.34-.35 1.04-.21 1.55.31.52.51.66 1.21.31 1.55l-3.24 3.25z" fill="#a7aaad" /></svg>
<svg class="a" style="left:3.2px;top:485.1px;" width="12.8" height="12.8" viewBox="0 0 20 20"><path d="M10 9.25c-2.27 0-2.73-3.44-2.73-3.44C7 4.02 7.82 2 9.97 2c2.16 0 2.98 2.02 2.71 3.81 0 0-.41 3.44-2.68 3.44zm0 2.57L12.72 10c2.39 0 4.52 2.33 4.52 4.53v2.49s-3.65 1.13-7.24 1.13c-3.650 0-7.24-1.13-7.24-1.13v-2.49c0-2.25 1.94-4.48 4.47-4.48z" fill="#a7aaad" /></svg>
<svg class="a" style="left:3.2px;top:506.9px;" width="12.8" height="12.8" viewBox="0 0 20 20"><path d="M16.68 9.77c-1.34 1.34-3.3 1.67-4.95.99l-5.41 6.52c-.99.99-2.59.99-3.58 0s-.99-2.59 0-3.57l6.52-5.42c-.68-1.650-.35-3.610.99-4.95 1.28-1.28 3.12-1.62 4.72-1.06l-2.89 2.89 2.82 2.82 2.86-2.87c.53 1.58.18 3.39-1.08 4.650z" fill="#a7aaad" /></svg>
<svg class="a" style="left:3.2px;top:529.4px;" width="12.8" height="12.8" viewBox="0 0 20 20"><path d="M18 16V4c0-.55-.45-1-1-1H3c-.55 0-1 .45-1 1v12c0 .55.45 1 1 1h14c.55 0 1-.45 1-1zM8 11h1c.55 0 1 .45 1 1s-.45 1-1 1H8v1.5c0 .28-.22.5-.5.5s-.5-.22-.5-.5V13H6c-.55 0-1-.45-1-1s.45-1 1-1h1V5.5c0-.28.22-.5.5-.5s.5.22.5.5V11zm5-2h-1c-.55 0-1-.45-1-1s.45-1 1-1h1V5.5c0-.28.22-.5.5-.5s.5.22.5.5V7h1c.55 0 1 .45 1 1s-.45 1-1 1h-1v5.5c0 .28-.22.5-.5.5s-.5-.22-.5-.5V9z" fill="#a7aaad" fill-rule="evenodd" /></svg>
<svg class="a" style="left:4.15px;top:552.25px;" width="11.5" height="11.5" viewBox="0 0 20 20"><circle cx="10" cy="10" r="8.5" fill="#a7aaad"/><path d="M12.5 6 L6.5 10 L12.5 14 Z" fill="#1d2327"/></svg>
<svg class="a" style="left:2px;top:0.3px;" width="14" height="14" viewBox="0 0 14 14"><circle cx="7" cy="7" r="6.5" fill="#a7aaad"/><circle cx="7" cy="7" r="5.6" stroke="#1d2327" stroke-width="0.6" fill="none"/><text x="7" y="10.9" font-size="10.5" font-weight="700" text-anchor="middle" fill="#1d2327" font-family="Liberation Serif">W</text></svg>
<svg class="a" style="left:25.75px;top:1.95px;" width="12.5" height="12.5" viewBox="0 0 20 20"><path d="M16 8.5l1.53 1.53-1.06 1.06L10 4.62l-6.47 6.47-1.06-1.06L10 2.5l4 4v-2h2v4zm-6-2.46l6 5.99V18H4v-5.97zM12 17v-5H8v5h4z" fill="#a7aaad" fill-rule="evenodd" /></svg>
<svg class="a" style="left:212.95px;top:1.75px;" width="11.5" height="11.5" viewBox="0 0 20 20"><path d="M4 9 A6 6 0 0 1 15 6.5" stroke="#a7aaad" stroke-width="2.2" fill="none"/><path d="M16.5 2.5 L16.5 8.5 L10.8 7.5 Z" fill="#a7aaad"/><path d="M16 11 A6 6 0 0 1 5 13.5" stroke="#a7aaad" stroke-width="2.2" fill="none"/><path d="M3.5 17.5 L3.5 11.5 L9.2 12.5 Z" fill="#a7aaad"/></svg>
<svg class="a" style="left:244.45px;top:2.05px;" width="11.5" height="11.5" viewBox="0 0 20 20"><path d="M5 2h9c1.1 0 2 .9 2 2v7c0 1.1-.9 2-2 2h-2l-5 5v-5H5c-1.1 0-2-.9-2-2V4c0-1.1.9-2 2-2z" fill="#a7aaad" /></svg>
<svg class="a" style="left:276.95px;top:1.75px;" width="11.5" height="11.5" viewBox="0 0 20 20"><path d="M10 3 V17 M3 10 H17" stroke="#a7aaad" stroke-width="2.6"/></svg>
<div class="t b" style="left:1192.50px;top:9px;font-size:8px;color:#fff;">W</div>
<svg class="a" style="left:1063px;top:24px;" width="16" height="16" viewBox="0 0 16 16"><path d="M3.5 4 V14" stroke="#50575e" stroke-width="1.4"/><path d="M3.5 4.8 H7 V7.6 H12.3 V11.2 H7.5" stroke="#50575e" stroke-width="1.3" fill="none"/><circle cx="8.3" cy="2.2" r="1.9" fill="#cc1818"/></svg>
<svg class="a" style="left:1110px;top:23.5px;" width="18" height="18" viewBox="0 0 18 18"><path d="M2.3 1.8 H16 V11.6 H5 L2.3 15.8 Z" stroke="#50575e" stroke-width="1.3" fill="none" stroke-linejoin="round"/><path d="M5.6 6 H12.5 M5.6 9.6 H9.4" stroke="#50575e" stroke-width="1.3"/></svg>
<svg class="a" style="left:1168px;top:24.5px;" width="17" height="17" viewBox="0 0 17 17"><circle cx="8.3" cy="8.1" r="6.9" stroke="#6c7075" stroke-width="1.3" fill="none"/><path d="M8.3 8.1 V3 A5.1 5.1 0 1 0 13.4 8.1 Z" fill="#7c7f84"/></svg>
<svg class="a" style="left:1020px;top:156.5px;" width="8" height="12" viewBox="0 0 8 12"><circle cx="3.9" cy="3.2" r="2.5" fill="#8c8f94"/><path d="M3.9 4.5 V11" stroke="#8c8f94" stroke-width="1.2"/></svg>
<svg class="a" style="left:1017.5px;top:181px;" width="13" height="8" viewBox="0 0 13 8"><path d="M0.8 4 Q6.5 -2 12.2 4 Q6.5 10 0.8 4 Z" stroke="#8c8f94" stroke-width="1" fill="none"/><circle cx="6.5" cy="4" r="2.2" fill="#8c8f94"/></svg>
<svg class="a" style="left:1019px;top:200.5px;" width="11" height="12" viewBox="0 0 11 12"><rect x="0.6" y="2" width="9.8" height="9.3" stroke="#8c8f94" stroke-width="1.1" fill="none"/><rect x="0.6" y="2" width="9.8" height="2" fill="#8c8f94"/><path d="M2.5 0.5 V3 M8.5 0.5 V3" stroke="#8c8f94" stroke-width="1.1"/><path d="M3 5.5 V10 M5.5 5.5 V10 M8 5.5 V10" stroke="#8c8f94" stroke-width="1"/></svg>
<svg class="a" style="left:122.5px;top:540.5px;" width="8" height="8" viewBox="0 0 8 8"><path d="M7.4 1.9 A2.3 2.3 0 0 1 4.3 4.6 L1.4 7.4 L0.6 6.6 L3.4 3.7 A2.3 2.3 0 0 1 6.1 0.6 L4.9 1.8 L6.2 3.1 Z" fill="#3c434a"/></svg>
<svg class="a" style="left:122px;top:566px;" width="10" height="10" viewBox="0 0 10 10"><path d="M1.3 5.5 L6.3 1.2 L9.3 3.9 L4.4 8.8 Z" fill="#5b95c8" stroke="#2271b1" stroke-width="0.9" stroke-linejoin="round"/></svg>
<svg class="a" style="left:122.5px;top:594.5px;" width="10" height="8" viewBox="0 0 10 8"><rect x="0.3" y="0.5" width="6" height="6" rx="0.6" fill="#2271b1"/><path d="M6.3 2.2 H8 L9.3 3.8 V6.5 H6.3 Z" fill="#2271b1"/><circle cx="2.2" cy="6.6" r="1.1" fill="#2271b1"/><circle cx="7.4" cy="6.6" r="1.1" fill="#2271b1"/></svg>
<svg class="a" style="left:122.5px;top:620.5px;" width="9" height="8" viewBox="0 0 9 8"><g transform="rotate(-40 4.5 4)"><rect x="0.4" y="2.5" width="4.6" height="3" rx="1.5" stroke="#2271b1" stroke-width="1.1" fill="none"/><rect x="4" y="2.5" width="4.6" height="3" rx="1.5" stroke="#2271b1" stroke-width="1.1" fill="none"/></g></svg>
<svg class="a" style="left:122px;top:646.6px;" width="9" height="8" viewBox="0 0 9 8"><rect x="0.5" y="0.5" width="8" height="7" stroke="#2271b1" stroke-width="1" fill="none"/><rect x="0.5" y="0.5" width="8" height="2" fill="#2271b1"/><path d="M2 4.3 H7 M2 6 H7" stroke="#2271b1" stroke-width="0.9"/></svg>
<svg class="a" style="left:122.5px;top:673.9px;" width="8" height="8" viewBox="0 0 8 8"><circle cx="4" cy="4" r="2.7" fill="#2271b1"/><path d="M4 0.2 V7.8 M0.2 4 H7.8 M1.3 1.3 L6.7 6.7 M6.7 1.3 L1.3 6.7" stroke="#2271b1" stroke-width="1.4"/><circle cx="4" cy="4" r="1" fill="#fafafa"/></svg>
<svg class="a" style="left:122.5px;top:700.5px;" width="9" height="9" viewBox="0 0 9 9"><path d="M0.8 8.2 L2.2 5.6 L1.3 4.2 L3.6 2.6 L6.3 5.4 L4.6 7.6 L3.2 6.8 Z" fill="#2271b1"/><path d="M4.2 2.8 L6.4 0.6 M5.9 4.6 L8.2 2.5" stroke="#2271b1" stroke-width="1.2"/></svg>
<div class="t b" style="left:210.70px;top:222px;font-size:11px;color:#50575e;">B</div>
<svg class="a" style="left:228.4px;top:216px;" width="12" height="12" viewBox="0 0 12 12"><path d="M4.2 2 H9.6 M2.4 10.2 H7.8 M6.9 2 L5.1 10.2" stroke="#50575e" stroke-width="1.5"/></svg>
<svg class="a" style="left:250px;top:216px;" width="12" height="12" viewBox="0 0 12 12"><path d="M3.3 2.5 H10.5 M3.3 6 H10.5 M3.3 9.5 H10.5" stroke="#50575e" stroke-width="1.1"/><path d="M1 2.5 H2.2 M1 6 H2.2 M1 9.5 H2.2" stroke="#50575e" stroke-width="1.3"/></svg>
<svg class="a" style="left:270.6px;top:216px;" width="12" height="12" viewBox="0 0 12 12"><path d="M4 2.5 H10.5 M4 6 H10.5 M4 9.5 H10.5" stroke="#50575e" stroke-width="1.1"/><path d="M1.5 1.5 V3.5 M1 6 H2.5 M1 9.5 H2.5" stroke="#50575e" stroke-width="0.9"/></svg>
<svg class="a" style="left:291.4px;top:216px;" width="12" height="12" viewBox="0 0 12 12"><path d="M1 9.5 V6.5 Q1 3 4.5 2.5 V4 Q3 4.4 2.8 6 H5 V9.5 Z M6.5 9.5 V6.5 Q6.5 3 10 2.5 V4 Q8.5 4.4 8.3 6 H10.5 V9.5 Z" fill="#50575e"/></svg>
<svg class="a" style="left:312.4px;top:216px;" width="12" height="12" viewBox="0 0 12 12"><path d="M1 2 H11 M1 4.7 H7 M1 7.4 H11 M1 10.1 H7" stroke="#50575e" stroke-width="1.3"/></svg>
<svg class="a" style="left:333px;top:216px;" width="12" height="12" viewBox="0 0 12 12"><path d="M1 2 H11 M3 4.7 H9 M1 7.4 H11 M3 10.1 H9" stroke="#50575e" stroke-width="1.3"/></svg>
<svg class="a" style="left:354px;top:216px;" width="12" height="12" viewBox="0 0 12 12"><path d="M1 2 H11 M5 4.7 H11 M1 7.4 H11 M5 10.1 H11" stroke="#50575e" stroke-width="1.3"/></svg>
<svg class="a" style="left:375px;top:216px;" width="12" height="12" viewBox="0 0 12 12"><rect x="5.8" y="0.2" width="4" height="7" rx="2" transform="rotate(45 7.8 3.7)" stroke="#50575e" stroke-width="1.4" fill="none"/><rect x="2.2" y="4.3" width="4" height="7" rx="2" transform="rotate(45 4.2 7.8)" stroke="#50575e" stroke-width="1.4" fill="none"/></svg>
<svg class="a" style="left:396px;top:216px;" width="12" height="12" viewBox="0 0 12 12"><rect x="0.5" y="1.5" width="11" height="3" fill="#50575e"/><rect x="0.5" y="7.5" width="11" height="3" fill="#50575e"/><path d="M1 6 H3 M4.5 6 H7.5 M9 6 H11" stroke="#50575e" stroke-width="0.9"/></svg>
<svg class="a" style="left:417px;top:216px;" width="12" height="12" viewBox="0 0 12 12"><rect x="0.5" y="0.8" width="11" height="10.4" stroke="#50575e" stroke-width="1" fill="none"/><rect x="0.5" y="0.8" width="11" height="2.2" fill="#50575e"/><path d="M1 5 H11 M1 7.2 H11 M1 9.4 H11" stroke="#50575e" stroke-width="0.8"/></svg>
<div class="t b" style="left:210.70px;top:804px;font-size:11px;color:#50575e;">B</div>
<svg class="a" style="left:228.2px;top:797.7px;" width="12" height="12" viewBox="0 0 12 12"><path d="M4.2 2 H9.6 M2.4 10.2 H7.8 M6.9 2 L5.1 10.2" stroke="#50575e" stroke-width="1.5"/></svg>
<svg class="a" style="left:249.3px;top:797.7px;" width="12" height="12" viewBox="0 0 12 12"><path d="M3.3 2.5 H10.5 M3.3 6 H10.5 M3.3 9.5 H10.5" stroke="#50575e" stroke-width="1.1"/><path d="M1 2.5 H2.2 M1 6 H2.2 M1 9.5 H2.2" stroke="#50575e" stroke-width="1.3"/></svg>
<svg class="a" style="left:270.3px;top:797.7px;" width="12" height="12" viewBox="0 0 12 12"><path d="M4 2.5 H10.5 M4 6 H10.5 M4 9.5 H10.5" stroke="#50575e" stroke-width="1.1"/><path d="M1.5 1.5 V3.5 M1 6 H2.5 M1 9.5 H2.5" stroke="#50575e" stroke-width="0.9"/></svg>
<svg class="a" style="left:291px;top:797.7px;" width="12" height="12" viewBox="0 0 12 12"><path d="M1 9.5 V6.5 Q1 3 4.5 2.5 V4 Q3 4.4 2.8 6 H5 V9.5 Z M6.5 9.5 V6.5 Q6.5 3 10 2.5 V4 Q8.5 4.4 8.3 6 H10.5 V9.5 Z" fill="#50575e"/></svg>
<svg class="a" style="left:312px;top:797.7px;" width="12" height="12" viewBox="0 0 12 12"><path d="M1 2 H11 M1 4.7 H7 M1 7.4 H11 M1 10.1 H7" stroke="#50575e" stroke-width="1.3"/></svg>
<svg class="a" style="left:332.7px;top:797.7px;" width="12" height="12" viewBox="0 0 12 12"><path d="M1 2 H11 M3 4.7 H9 M1 7.4 H11 M3 10.1 H9" stroke="#50575e" stroke-width="1.3"/></svg>
<svg class="a" style="left:354px;top:797.7px;" width="12" height="12" viewBox="0 0 12 12"><path d="M1 2 H11 M5 4.7 H11 M1 7.4 H11 M5 10.1 H11" stroke="#50575e" stroke-width="1.3"/></svg>
<svg class="a" style="left:375px;top:797.7px;" width="12" height="12" viewBox="0 0 12 12"><rect x="5.8" y="0.2" width="4" height="7" rx="2" transform="rotate(45 7.8 3.7)" stroke="#50575e" stroke-width="1.4" fill="none"/><rect x="2.2" y="4.3" width="4" height="7" rx="2" transform="rotate(45 4.2 7.8)" stroke="#50575e" stroke-width="1.4" fill="none"/></svg>
<svg class="a" style="left:396px;top:797.7px;" width="12" height="12" viewBox="0 0 12 12"><rect x="0.5" y="1.5" width="11" height="3" fill="#50575e"/><rect x="0.5" y="7.5" width="11" height="3" fill="#50575e"/><path d="M1 6 H3 M4.5 6 H7.5 M9 6 H11" stroke="#50575e" stroke-width="0.9"/></svg>
<svg class="a" style="left:416.8px;top:797.7px;" width="12" height="12" viewBox="0 0 12 12"><path d="M2.5 2.5 L9.5 9.5 M9.5 2.5 L2.5 9.5" stroke="#50575e" stroke-width="0.9"/><rect x="1.2" y="1.5" width="2.2" height="2.2" fill="#50575e"/><rect x="8.6" y="1.5" width="2.2" height="2.2" fill="#50575e"/><rect x="1.2" y="8.3" width="2.2" height="2.2" fill="#50575e"/><rect x="8.6" y="8.3" width="2.2" height="2.2" fill="#50575e"/><rect x="4.6" y="4.6" width="2.8" height="2.8" fill="#50575e"/></svg>
<svg class="a" style="left:437.8px;top:797.7px;" width="12" height="12" viewBox="0 0 12 12"><rect x="0.5" y="0.8" width="11" height="10.4" stroke="#50575e" stroke-width="1" fill="none"/><rect x="0.5" y="0.8" width="11" height="2.2" fill="#50575e"/><path d="M1 5 H11 M1 7.2 H11 M1 9.4 H11" stroke="#50575e" stroke-width="0.8"/></svg>
<svg class="a" style="left:959.6px;top:215.5px;" width="12" height="12" viewBox="0 0 12 12"><path d="M2.5 2.5 L9.5 9.5 M9.5 2.5 L2.5 9.5" stroke="#50575e" stroke-width="0.9"/><rect x="1.2" y="1.5" width="2.2" height="2.2" fill="#50575e"/><rect x="8.6" y="1.5" width="2.2" height="2.2" fill="#50575e"/><rect x="1.2" y="8.3" width="2.2" height="2.2" fill="#50575e"/><rect x="8.6" y="8.3" width="2.2" height="2.2" fill="#50575e"/><rect x="4.6" y="4.6" width="2.8" height="2.8" fill="#50575e"/></svg>
</body></html>
